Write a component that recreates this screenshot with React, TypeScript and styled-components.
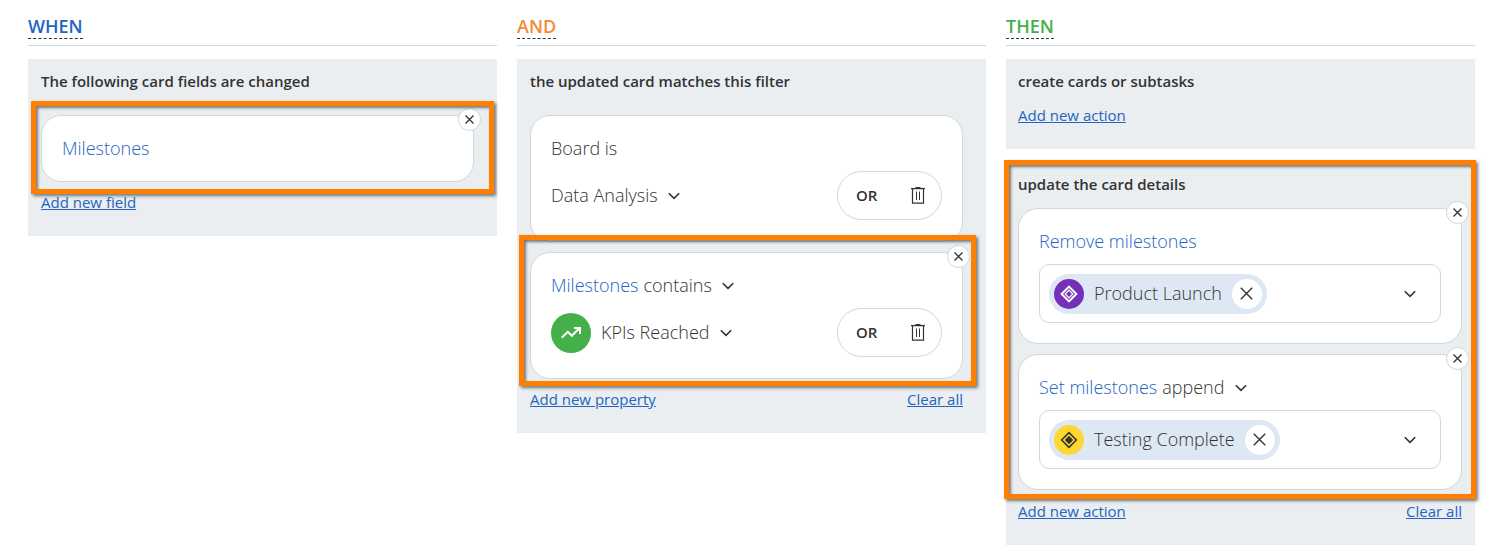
import React from 'react';
import styled, { createGlobalStyle } from 'styled-components';

const color = {
  text: '#333333',
  blue: '#2565c0',
  orange: '#f58a33',
  green: '#43b049',
  line: '#cfd8dc',
  panel: '#eaeef1',
  chip: '#dee8f4',
  mark: '#ff8000',
};

const GlobalStyle = createGlobalStyle`
  *, *::before, *::after { box-sizing: border-box; }
  body {
    margin: 0;
    background: #ffffff;
    color: ${color.text};
    font-family: "Open Sans", "Noto Sans", sans-serif;
    font-size: 18px;
    font-weight: 340;
    line-height: 25px;
  }
  button, select { font: inherit; color: inherit; cursor: pointer; }
`;

const Page = styled.main`
  display: grid;
  grid-template-columns: repeat(3, minmax(0, 1fr));
  gap: 20px;
  align-items: start;
  padding: 14px 22px 10px 28px;
`;

const Column = styled.section`
  display: flex;
  flex-direction: column;
`;

const ColumnHeader = styled.header`
  display: flex;
  height: 32px;
  margin-bottom: 13px;
  border-bottom: 1px solid ${color.line};
`;

const ColumnTitle = styled.h2<{ $color: string }>`
  height: 25px;
  margin: 0;
  border-bottom: 1px dashed ${color.text};
  color: ${p => p.$color};
  font-size: 18px;
  font-weight: 580;
  line-height: 25px;
`;

const Panel = styled.div<{ $wide?: boolean }>`
  padding: ${p => (p.$wide ? '12px 13px 24px 12px' : '12px 23px 24px 13px')};
  background: ${color.panel};

  & + & { margin-top: 13px; }
`;

const PanelTitle = styled.h3<{ $spaced?: boolean }>`
  margin: 0 0 ${p => (p.$spaced ? 24 : 14)}px;
  font-size: 15px;
  font-weight: 580;
  line-height: 20px;
`;

const Marked = styled.div`
  position: relative;
`;

const Highlight = styled.div<{ $inset: string }>`
  position: absolute;
  inset: ${p => p.$inset};
  border: 5px solid ${color.mark};
  box-shadow: 2px 2px 3px rgba(0, 0, 0, 0.5), inset 2px 2px 3px rgba(0, 0, 0, 0.5);
  pointer-events: none;
`;

const CardStack = styled.div`
  display: flex;
  flex-direction: column;
  gap: 10px;
`;

const Card = styled.article`
  position: relative;
  display: flex;
  flex-direction: column;
  gap: 10px;
  padding: 20px;
  border: 1px solid ${color.line};
  border-radius: 20px;
  background: #ffffff;
`;

const RemoveCard = styled.button`
  position: absolute;
  top: -8px;
  right: -8px;
  display: flex;
  align-items: center;
  justify-content: center;
  width: 23px;
  height: 23px;
  padding: 0;
  border: 1px solid ${color.line};
  border-radius: 50%;
  background: #ffffff;
`;

const CardLine = styled.div`
  display: flex;
  align-items: center;
  gap: 5px;
  height: 25px;
`;

const FieldName = styled.span`
  color: ${color.blue};
`;

const ValueRow = styled.div`
  display: flex;
  align-items: flex-start;
  justify-content: space-between;
  height: 50px;
`;

const Value = styled.div`
  display: flex;
  align-items: center;
  gap: 10px;
  height: 49px;
`;

const SelectWrap = styled.label`
  display: flex;
  align-items: center;
  gap: 10px;
`;

const PlainSelect = styled.select`
  appearance: none;
  height: 25px;
  padding: 0;
  border: 0;
  background: transparent;
`;

const Badge = styled.span<{ $size: number; $fill: string }>`
  display: flex;
  align-items: center;
  justify-content: center;
  width: ${p => p.$size}px;
  height: ${p => p.$size}px;
  border-radius: 50%;
  background: ${p => p.$fill};
`;

const Pill = styled.div`
  display: flex;
  align-items: center;
  justify-content: space-between;
  width: 105px;
  height: 49px;
  padding: 0 16px 0 18px;
  border: 1px solid ${color.line};
  border-radius: 25px;
`;

const PillButton = styled.button`
  display: flex;
  align-items: center;
  padding: 0;
  border: 0;
  background: transparent;
  font-size: 15px;
  font-weight: 560;
`;

const MultiSelect = styled.div`
  display: flex;
  align-items: center;
  justify-content: space-between;
  height: 59px;
  padding: 0 20px 0 9px;
  border: 1px solid ${color.line};
  border-radius: 10px;
`;

const Chip = styled.span`
  display: flex;
  align-items: center;
  gap: 10px;
  height: 40px;
  padding: 0 5px;
  border-radius: 20px;
  background: ${color.chip};
`;

const ChipRemove = styled.button`
  display: flex;
  align-items: center;
  justify-content: center;
  width: 30px;
  height: 30px;
  padding: 0;
  border: 0;
  border-radius: 50%;
  background: #ffffff;
`;

const IconButton = styled.button`
  display: flex;
  align-items: center;
  justify-content: center;
  width: 20px;
  height: 30px;
  padding: 0;
  border: 0;
  background: transparent;
`;

const Links = styled.nav<{ $gap?: number }>`
  display: flex;
  justify-content: space-between;
  margin-top: ${p => p.$gap ?? 0}px;
  font-size: 15px;
  font-weight: 400;
  line-height: 20px;
`;

const Link = styled.a`
  color: ${color.blue};
  text-decoration: underline;
`;

const Chevron = () => (
  <svg width="12" height="8" viewBox="0 0 12 8" fill="none" stroke="currentColor" strokeWidth="1.6" aria-hidden="true">
    <path d="M0.8 1.2 6 6.4 11.2 1.2" />
  </svg>
);

const Cross = ({ size, weight }: { size: number; weight: number }) => (
  <svg width={size} height={size} viewBox="0 0 12 12" fill="none" stroke="currentColor" strokeWidth={weight} aria-hidden="true">
    <path d="M0.7 0.7 11.3 11.3M11.3 0.7 0.7 11.3" />
  </svg>
);

const Trash = () => (
  <svg width="14" height="17" viewBox="0 0 14 17" fill="none" stroke="currentColor" aria-hidden="true">
    <path d="M0 1.6h14" strokeWidth="1.3" />
    <path d="M4.5 0.5h5" />
    <path d="M1.5 1.6v14.6h11V1.6" strokeWidth="1.2" />
    <path d="M5.5 4.5v8.5M8.5 4.5v8.5" />
  </svg>
);

const Trend = () => (
  <svg width="20" height="12" viewBox="0 0 20 12" fill="none" stroke="#ffffff" strokeWidth="2" aria-hidden="true">
    <path d="M0.7 10.8 6.8 4.8 10.8 8.8 17.6 2" />
    <path d="M13 1h6v6" />
    <path d="M15.2 1H19v3.8z" fill="#ffffff" stroke="none" />
  </svg>
);

const Diamond = ({ tone, solid }: { tone: string; solid?: boolean }) => (
  <svg width="18" height="18" viewBox="0 0 18 18" fill="none" stroke={tone} aria-hidden="true">
    <path d="M9 1.6 16.4 9 9 16.4 1.6 9z" strokeWidth={solid ? 1.5 : 2} />
    {solid ? (
      <path d="M9 4.8 13.2 9 9 13.2 4.8 9z" fill={tone} stroke="none" />
    ) : (
      <path d="M9 5.2 12.8 9 9 12.8 5.2 9z" strokeWidth="1.2" />
    )}
  </svg>
);

const Dropdown = ({ label, value }: { label: string; value: string }) => (
  <SelectWrap>
    <PlainSelect aria-label={label} defaultValue={value}>
      <option value={value}>{value}</option>
    </PlainSelect>
    <Chevron />
  </SelectWrap>
);

const CloseCard = ({ label }: { label: string }) => (
  <RemoveCard type="button" aria-label={label}>
    <Cross size={9} weight={1.8} />
  </RemoveCard>
);

const OrPill = () => (
  <Pill>
    <PillButton type="button">OR</PillButton>
    <PillButton type="button" aria-label="Delete value">
      <Trash />
    </PillButton>
  </Pill>
);

const MilestonePicker = ({ name, fill, children }: { name: string; fill: string; children: React.ReactNode }) => (
  <MultiSelect>
    <Chip>
      <Badge $size={30} $fill={fill}>{children}</Badge>
      <span>{name}</span>
      <ChipRemove type="button" aria-label={`Remove ${name}`}>
        <Cross size={13} weight={1.3} />
      </ChipRemove>
    </Chip>
    <IconButton type="button" aria-label="Choose milestones" aria-haspopup="listbox">
      <Chevron />
    </IconButton>
  </MultiSelect>
);

export default function App() {
  return (
    <>
      <GlobalStyle />
      <Page>
        <Column>
          <ColumnHeader>
            <ColumnTitle $color={color.blue}>WHEN</ColumnTitle>
          </ColumnHeader>
          <Panel>
            <PanelTitle $spaced>The following card fields are changed</PanelTitle>
            <Marked>
              <Card>
                <CardLine>
                  <FieldName>Milestones</FieldName>
                </CardLine>
                <CloseCard label="Remove field" />
              </Card>
              <Highlight $inset="-14px -20px -12px -10px" />
            </Marked>
            <Links $gap={10}>
              <Link href="#add-field">Add new field</Link>
            </Links>
          </Panel>
        </Column>

        <Column>
          <ColumnHeader>
            <ColumnTitle $color={color.orange}>AND</ColumnTitle>
          </ColumnHeader>
          <Panel>
            <PanelTitle $spaced>the updated card matches this filter</PanelTitle>
            <CardStack>
              <Card>
                <CardLine>Board is</CardLine>
                <ValueRow>
                  <Value>
                    <Dropdown label="Board" value="Data Analysis" />
                  </Value>
                  <OrPill />
                </ValueRow>
              </Card>
              <Marked>
                <Card>
                  <CardLine>
                    <FieldName>Milestones</FieldName>
                    <Dropdown label="Condition" value="contains" />
                  </CardLine>
                  <ValueRow>
                    <Value>
                      <Badge $size={40} $fill={color.green}>
                        <Trend />
                      </Badge>
                      <Dropdown label="Milestone" value="KPIs Reached" />
                    </Value>
                    <OrPill />
                  </ValueRow>
                  <CloseCard label="Remove property" />
                </Card>
                <Highlight $inset="-17px -13px -7px -11px" />
              </Marked>
            </CardStack>
            <Links $gap={10}>
              <Link href="#add-property">Add new property</Link>
              <Link href="#clear-filter">Clear all</Link>
            </Links>
          </Panel>
        </Column>

        <Column>
          <ColumnHeader>
            <ColumnTitle $color={color.green}>THEN</ColumnTitle>
          </ColumnHeader>
          <Panel $wide>
            <PanelTitle>create cards or subtasks</PanelTitle>
            <Links>
              <Link href="#add-create-action">Add new action</Link>
            </Links>
          </Panel>
          <Panel $wide>
            <Marked>
              <PanelTitle>update the card details</PanelTitle>
              <CardStack>
                <Card>
                  <CardLine>
                    <FieldName>Remove milestones</FieldName>
                  </CardLine>
                  <MilestonePicker name="Product Launch" fill="#7431b8">
                    <Diamond tone="#ffffff" />
                  </MilestonePicker>
                  <CloseCard label="Remove action" />
                </Card>
                <Card>
                  <CardLine>
                    <FieldName>Set milestones</FieldName>
                    <Dropdown label="Mode" value="append" />
                  </CardLine>
                  <MilestonePicker name="Testing Complete" fill="#fdd835">
                    <Diamond tone="#333333" solid />
                  </MilestonePicker>
                  <CloseCard label="Remove action" />
                </Card>
              </CardStack>
              <Highlight $inset="-14px -14px -9px -14px" />
            </Marked>
            <Links $gap={11}>
              <Link href="#add-update-action">Add new action</Link>
              <Link href="#clear-actions">Clear all</Link>
            </Links>
          </Panel>
        </Column>
      </Page>
    </>
  );
}
